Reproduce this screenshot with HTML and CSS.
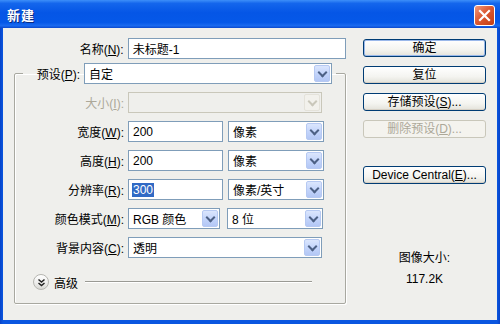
FILE: index.html
```html
<!DOCTYPE html>
<html lang="zh-CN">
<head>
    <meta charset="UTF-8">
    <meta name="viewport" content="width=device-width, initial-scale=1.0">
    <title>新建</title>
    <link rel="stylesheet" href="styles.css">
</head>
<body>
    <div class="window">
        <div class="titlebar">
            <span class="title">新建</span>
            <span class="close">
                <svg width="13" height="13" viewBox="0 0 13 13"><path d="M2 2 L11 11 M11 2 L2 11" stroke="#fff" stroke-width="2.2" stroke-linecap="square"/></svg>
            </span>
        </div>

        <div class="body">
            <div class="main">
                <div class="row">
                    <span class="lbl">名称(<u>N</u>):</span>
                    <div class="input w-name">未标题-1</div>
                </div>

                <fieldset class="group">
                    <legend class="preset">
                        <span class="preset-lbl">预设(<u>P</u>):</span>
                        <div class="select w-preset"><span>自定</span><i class="arrow"></i></div>
                    </legend>

                    <div class="row">
                        <span class="lbl disabled">大小(<u>I</u>):</span>
                        <div class="select w-full is-disabled"><span></span><i class="arrow"></i></div>
                    </div>
                    <div class="row">
                        <span class="lbl">宽度(<u>W</u>):</span>
                        <div class="input w-num">200</div>
                        <div class="select w-unit"><span>像素</span><i class="arrow"></i></div>
                    </div>
                    <div class="row">
                        <span class="lbl">高度(<u>H</u>):</span>
                        <div class="input w-num">200</div>
                        <div class="select w-unit"><span>像素</span><i class="arrow"></i></div>
                    </div>
                    <div class="row">
                        <span class="lbl">分辨率(<u>R</u>):</span>
                        <div class="input w-num"><span class="sel-text">300</span></div>
                        <div class="select w-unit"><span>像素/英寸</span><i class="arrow"></i></div>
                    </div>
                    <div class="row">
                        <span class="lbl">颜色模式(<u>M</u>):</span>
                        <div class="select w-mode"><span>RGB 颜色</span><i class="arrow"></i></div>
                        <div class="select w-unit"><span>8 位</span><i class="arrow"></i></div>
                    </div>
                    <div class="row">
                        <span class="lbl">背景内容(<u>C</u>):</span>
                        <div class="select w-full"><span>透明</span><i class="arrow"></i></div>
                    </div>

                    <div class="advanced">
                        <span class="adv-btn">
                            <svg width="9" height="9" viewBox="0 0 9 9"><path d="M1.5 1.5 L4.5 4 L7.5 1.5 M1.5 5 L4.5 7.5 L7.5 5" fill="none" stroke="#222" stroke-width="1.5"/></svg>
                        </span>
                        <span class="adv-text">高级</span>
                        <span class="adv-line"></span>
                    </div>
                </fieldset>
            </div>

            <div class="side">
                <button class="btn default">确定</button>
                <button class="btn">复位</button>
                <button class="btn">存储预设(<u>S</u>)...</button>
                <button class="btn" disabled>删除预设(<u>D</u>)...</button>
                <button class="btn device">Device Central(<u>E</u>)...</button>
                <div class="info">
                    <div>图像大小:</div>
                    <div class="info-size">117.2K</div>
                </div>
            </div>
        </div>
    </div>
</body>
</html>
```

FILE: styles.css
```css
* {
    margin: 0;
    padding: 0;
    box-sizing: border-box;
}

body {
    font-family: 'Liberation Sans', 'Noto Sans CJK SC', sans-serif;
    font-size: 12px;
    color: #000;
    background: #fff;
}

.window {
    width: 500px;
    height: 324px;
    display: flex;
    flex-direction: column;
    background: linear-gradient(90deg, #0843c8 0%, #0a56e0 3px, #0a56e0 calc(100% - 3px), #0843c8 100%);
}

.titlebar {
    height: 28px;
    display: flex;
    align-items: center;
    justify-content: space-between;
    padding: 0 5px 0 7px;
    background: linear-gradient(180deg, #3d8ff9 0%, #1466ec 12%, #0556e6 45%, #0558e8 80%, #1a6af0 92%, #0a48cc 100%);
}

.title {
    color: #fff;
    font-weight: bold;
    font-size: 13px;
    text-shadow: 1px 1px 0 #0a2a80;
    letter-spacing: 1px;
}

.close {
    width: 21px;
    height: 21px;
    margin-top: 2px;
    border: 1px solid #fff;
    border-radius: 3px;
    background: linear-gradient(135deg, #f09a7c 0%, #dc5a34 45%, #c33d12 100%);
    display: flex;
    align-items: center;
    justify-content: center;
}

.body {
    flex: 1;
    margin: 0 3px 4px;
    background: #efefec;
    display: flex;
    padding: 10px 11px 0 11px;
}

.main {
    width: 332px;
}

.row {
    display: flex;
    align-items: center;
    height: 21px;
}

.lbl {
    width: 111px;
    text-align: right;
    padding-right: 1px;
    margin-right: 3px;
    white-space: nowrap;
}

.group .lbl {
    width: 110px;
}

.lbl.disabled {
    color: #aca899;
}

.input,
.select {
    height: 21px;
    border: 1px solid #7f9db9;
    background: #fff;
    display: flex;
    align-items: center;
    padding-left: 4px;
    white-space: nowrap;
}

.w-name { width: 219px; }
.w-preset { width: 248px; }
.w-full { width: 194px; }
.w-num { width: 95px; }
.w-mode { width: 92px; }
.w-unit { width: 96px; margin-left: 5px; }
.w-mode + .w-unit { margin-left: 7px; }

.select {
    justify-content: space-between;
    padding-right: 1px;
}

.arrow {
    width: 16px;
    height: 17px;
    border: 1px solid #b6c9f2;
    border-radius: 2px;
    background: linear-gradient(180deg, #dbe6fd 0%, #c4d5fb 50%, #b3c7f5 100%);
    position: relative;
}

.arrow::after {
    content: '';
    position: absolute;
    left: 4px;
    top: 3px;
    width: 5px;
    height: 5px;
    border-right: 2px solid #4d6185;
    border-bottom: 2px solid #4d6185;
    transform: rotate(45deg);
}

.select.is-disabled {
    border-color: #c9c7ba;
    background: #efefec;
}

.is-disabled .arrow {
    border-color: #e4e2da;
    background: #f2f1ec;
}

.is-disabled .arrow::after {
    border-color: #c9c7ba;
}

.sel-text {
    background: #316ac5;
    color: #fff;
    margin-left: -1px;
    padding: 0 1px;
}

.group {
    margin-top: 4px;
    width: 332px;
    height: 241px;
    border: 1px solid #a8a8a0;
    border-radius: 2px;
    box-shadow: 1px 1px 0 #fff, inset 1px 1px 0 #fff;
    padding: 8px 0 0 0;
}

.group .row + .row {
    margin-top: 8px;
}

.preset {
    margin-left: 8px;
    padding: 0 4px 0 0;
    display: flex;
    align-items: center;
}

.preset-lbl {
    width: 61px;
    text-align: right;
    padding-right: 4px;
}

.advanced {
    display: flex;
    align-items: center;
    margin-top: 16px;
    padding-left: 18px;
    height: 16px;
}

.adv-btn {
    width: 16px;
    height: 16px;
    border-radius: 50%;
    border: 1px solid #b5b5b0;
    background: linear-gradient(180deg, #ffffff 0%, #ececea 60%, #d8d8d4 100%);
    display: flex;
    align-items: center;
    justify-content: center;
}

.adv-text {
    margin-left: 5px;
}

.adv-line {
    width: 227px;
    height: 2px;
    margin-left: 7px;
    border-top: 1px solid #9a9a94;
    border-bottom: 1px solid #fff;
}

.side {
    margin-left: 17px;
    padding-top: 1px;
    width: 123px;
    display: flex;
    flex-direction: column;
}

.btn {
    height: 18px;
    margin-bottom: 9px;
    font-family: inherit;
    font-size: 12px;
    color: #000;
    border: 1px solid #003c74;
    border-radius: 3px;
    background: linear-gradient(180deg, #ffffff 0%, #f4f4f0 60%, #e3e2da 100%);
    box-shadow: inset 0 -1px 0 #d6d0c5;
    line-height: 14px;
}

.btn.default {
    box-shadow: inset 0 0 0 1px #9ab8ea;
}

.btn:disabled {
    border-color: #c9c7ba;
    color: #aca899;
    background: #f4f3ee;
    box-shadow: none;
}

.btn.device {
    margin-top: 19px;
}

.info {
    margin-top: 57px;
    text-align: center;
    line-height: 16px;
}

.info-size {
    margin-top: 5px;
}
```
